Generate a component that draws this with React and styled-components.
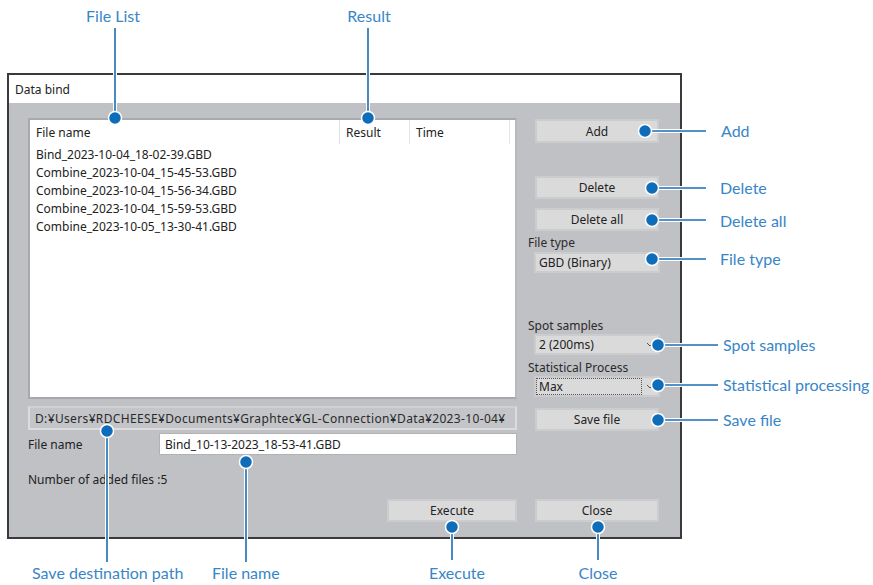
import React from 'react';
import styled, { createGlobalStyle } from 'styled-components';

const GlobalStyle = createGlobalStyle`
  html, body { margin: 0; padding: 0; background: #ffffff; }
  body { font-family: "Noto Sans", "DejaVu Sans", sans-serif; }
`;

// Layout
const Stage = styled.div`
  position: relative;
  width: 873px;
  height: 585px;
  overflow: hidden;
  background: #fff;
  padding: 73px 0 0 7px;
  box-sizing: border-box;
`;

const Dialog = styled.div`
  width: 675px;
  height: 466px;
  box-sizing: border-box;
  border: 2px solid #3a3a3a;
  display: flex;
  flex-direction: column;
  font-size: 12px;
  color: #222;
`;

const TitleBar = styled.div`
  flex: 0 0 28px;
  background: #fff;
  display: flex;
  align-items: center;
  padding-left: 6px;
  padding-top: 1px;
  box-sizing: border-box;
`;

const Body = styled.div`
  flex: 1;
  min-height: 0;
  background: #c0c1c5;
  display: grid;
  grid-template-columns: 489px 126px;
  column-gap: 17px;
  padding: 15px 0 14px 19px;
`;

const LeftCol = styled.div`
  display: flex;
  flex-direction: column;
`;

const RightCol = styled.div`
  display: flex;
  flex-direction: column;
`;

// File list
const ListBox = styled.div`
  flex: 0 0 281px;
  box-sizing: border-box;
  background: #fff;
  border: 2px solid #a7a9ae;
  border-right-color: #b8babe;
`;

const HeaderRow = styled.div`
  display: grid;
  grid-template-columns: 310px 70px 100px;
  height: 26px;
`;

const HeaderCell = styled.div`
  display: flex;
  align-items: center;
  padding-left: 6px;
  border-right: 1px solid #e4e4e4;
  margin-bottom: 2px;
`;

const Row = styled.div`
  height: 18px;
  line-height: 18px;
  padding-left: 6px;
`;

// Fields
const PathBox = styled.div`
  margin-top: 7px;
  flex: 0 0 24px;
  box-sizing: border-box;
  border: 2px solid #dcdcde;
  border-top-color: #d0d0d3;
  background: #c4c5c9;
  display: flex;
  align-items: center;
  padding-left: 5px;
  color: #2a2a2a;
  white-space: nowrap;
  overflow: hidden;
  letter-spacing: 0.35px;
`;

const FieldRow = styled.div`
  margin-top: 3px;
  display: flex;
  align-items: center;
  flex: 0 0 22px;
`;

const FieldLabel = styled.div`
  width: 131px;
`;

const TextInput = styled.div`
  flex: 1;
  height: 22px;
  box-sizing: border-box;
  background: #fff;
  border: 1px solid #b0b2b6;
  display: flex;
  align-items: center;
  padding-left: 5px;
`;

const Info = styled.div`
  margin-top: 17px;
  flex: 0 0 16px;
  line-height: 16px;
`;

// Buttons / combos
const Button = styled.div`
  margin-top: ${p => p.$mt || 0}px;
  margin-left: ${p => (p.$right ? 'auto' : `${p.$ml || 0}px`)};
  width: ${p => p.$w || 124}px;
  flex: 0 0 ${p => p.$h || 24}px;
  box-sizing: border-box;
  background: #dadadb;
  border: 2px solid #cbccce;
  display: flex;
  align-items: center;
  justify-content: center;
  color: #222;
`;

const SmallLabel = styled.div`
  margin-top: ${p => p.$mt || 0}px;
  margin-left: -6px;
  flex: 0 0 14px;
  line-height: 14px;
  color: #2a2a2a;
  white-space: nowrap;
`;

const Combo = styled.div`
  margin-top: ${p => p.$mt || 0}px;
  flex: 0 0 21px;
  width: 126px;
  box-sizing: border-box;
  background: #dadadb;
  border: 2px solid #cbccce;
  display: flex;
  align-items: center;
  padding-left: 1px;
  position: relative;
`;

const ComboText = styled.span`
  padding: 0 2px;
  ${p => p.$focus && `
    flex: 0 0 100px;
    height: 15px;
    line-height: 15px;
    outline: 1px dotted #555;
  `}
`;

const Arrow = styled.svg`
  position: absolute;
  right: 4px;
  top: 6px;
`;

// Callouts
const Leaders = styled.svg`
  position: absolute;
  left: 0;
  top: 0;
  pointer-events: none;
`;

const Tag = styled.div`
  position: absolute;
  font-family: "Lato", "Open Sans", sans-serif;
  font-size: 16px;
  color: #3886c7;
  line-height: 20px;
  white-space: nowrap;
  left: ${p => p.$x}px;
  top: ${p => p.$y - 10}px;
  transform: ${p => (p.$center ? 'translateX(-50%)' : 'none')};
`;

const leaders = [
  { x1: 115, y1: 28, x2: 115, y2: 118 },
  { x1: 368, y1: 28, x2: 368, y2: 118 },
  { x1: 645, y1: 131, x2: 706, y2: 131 },
  { x1: 652, y1: 188, x2: 706, y2: 188 },
  { x1: 652, y1: 220, x2: 706, y2: 220 },
  { x1: 652, y1: 259, x2: 706, y2: 259 },
  { x1: 658, y1: 345, x2: 718, y2: 345 },
  { x1: 658, y1: 385, x2: 718, y2: 385 },
  { x1: 658, y1: 420, x2: 718, y2: 420 },
  { x1: 452, y1: 527, x2: 452, y2: 560 },
  { x1: 598, y1: 527, x2: 598, y2: 560 },
  { x1: 107, y1: 431, x2: 107, y2: 562 },
  { x1: 246, y1: 462, x2: 246, y2: 562 },
];

// the dot sits on the end inside the dialog
const dots = [
  [115, 118], [368, 118], [645, 131], [652, 188], [652, 220], [652, 259],
  [658, 345], [658, 385], [658, 420], [452, 527], [598, 527], [107, 431], [246, 462],
];

const tags = [
  { text: 'File List', x: 113, y: 16, center: true },
  { text: 'Result', x: 369, y: 16, center: true },
  { text: 'Add', x: 721, y: 131 },
  { text: 'Delete', x: 720, y: 188 },
  { text: 'Delete all', x: 720, y: 221 },
  { text: 'File type', x: 720, y: 259 },
  { text: 'Spot samples', x: 723, y: 345 },
  { text: 'Statistical processing', x: 723, y: 385 },
  { text: 'Save file', x: 723, y: 420 },
  { text: 'Execute', x: 457, y: 573, center: true },
  { text: 'Close', x: 598, y: 573, center: true },
  { text: 'Save destination path', x: 32, y: 573 },
  { text: 'File name', x: 212, y: 573 },
];

const files = [
  'Bind_2023-10-04_18-02-39.GBD',
  'Combine_2023-10-04_15-45-53.GBD',
  'Combine_2023-10-04_15-56-34.GBD',
  'Combine_2023-10-04_15-59-53.GBD',
  'Combine_2023-10-05_13-30-41.GBD',
];

const ComboArrow = () => (
  <Arrow width="8" height="6" viewBox="0 0 8 6">
    <path d="M1 1 L4 4 L7 1" fill="none" stroke="#555" strokeWidth="1" />
  </Arrow>
);

export default function App() {
  return (
    <>
      <GlobalStyle />
      <Stage>
        <Dialog>
          <TitleBar>Data bind</TitleBar>
          <Body>
            <LeftCol>
              <ListBox>
                <HeaderRow>
                  <HeaderCell>File name</HeaderCell>
                  <HeaderCell>Result</HeaderCell>
                  <HeaderCell>Time</HeaderCell>
                </HeaderRow>
                {files.map(f => (
                  <Row key={f}>{f}</Row>
                ))}
              </ListBox>
              <PathBox>D:¥Users¥RDCHEESE¥Documents¥Graphtec¥GL-Connection¥Data¥2023-10-04¥</PathBox>
              <FieldRow>
                <FieldLabel>File name</FieldLabel>
                <TextInput>Bind_10-13-2023_18-53-41.GBD</TextInput>
              </FieldRow>
              <Info>Number of added files :5</Info>
              <Button $mt={11} $w={130} $h={23} $right>Execute</Button>
            </LeftCol>
            <RightCol>
              <Button $mt={1} $ml={1}>Add</Button>
              <Button $mt={33} $ml={1} $h={23}>Delete</Button>
              <Button $mt={9} $ml={1} $h={23}>Delete all</Button>
              <SmallLabel $mt={5}>File type</SmallLabel>
              <Combo $mt={2}>
                <ComboText>GBD (Binary)</ComboText>
              </Combo>
              <SmallLabel $mt={46}>Spot samples</SmallLabel>
              <Combo $mt={1}>
                <ComboText>2 (200ms)</ComboText>
                <ComboArrow />
              </Combo>
              <SmallLabel $mt={6}>Statistical Process</SmallLabel>
              <Combo $mt={1}>
                <ComboText $focus>Max</ComboText>
                <ComboArrow />
              </Combo>
              <Button $mt={11} $ml={1} $h={23}>Save file</Button>
              <Button $mt={68} $ml={1} $h={23}>Close</Button>
            </RightCol>
          </Body>
        </Dialog>

        <Leaders width="873" height="585" viewBox="0 0 873 585">
          {leaders.map((l, i) => (
            <line key={'w' + i} x1={l.x1} y1={l.y1} x2={l.x2} y2={l.y2} stroke="#fff" strokeWidth="4" />
          ))}
          {leaders.map((l, i) => (
            <line key={'b' + i} x1={l.x1} y1={l.y1} x2={l.x2} y2={l.y2} stroke="#1a6db3" strokeWidth="1.6" />
          ))}
          {dots.map(([x, y], i) => (
            <circle key={i} cx={x} cy={y} r="6.5" fill="#0e6cb9" stroke="#fff" strokeWidth="1.5" />
          ))}
        </Leaders>
        {tags.map(t => (
          <Tag key={t.text + t.x} $x={t.x} $y={t.y} $center={t.center}>{t.text}</Tag>
        ))}
      </Stage>
    </>
  );
}
